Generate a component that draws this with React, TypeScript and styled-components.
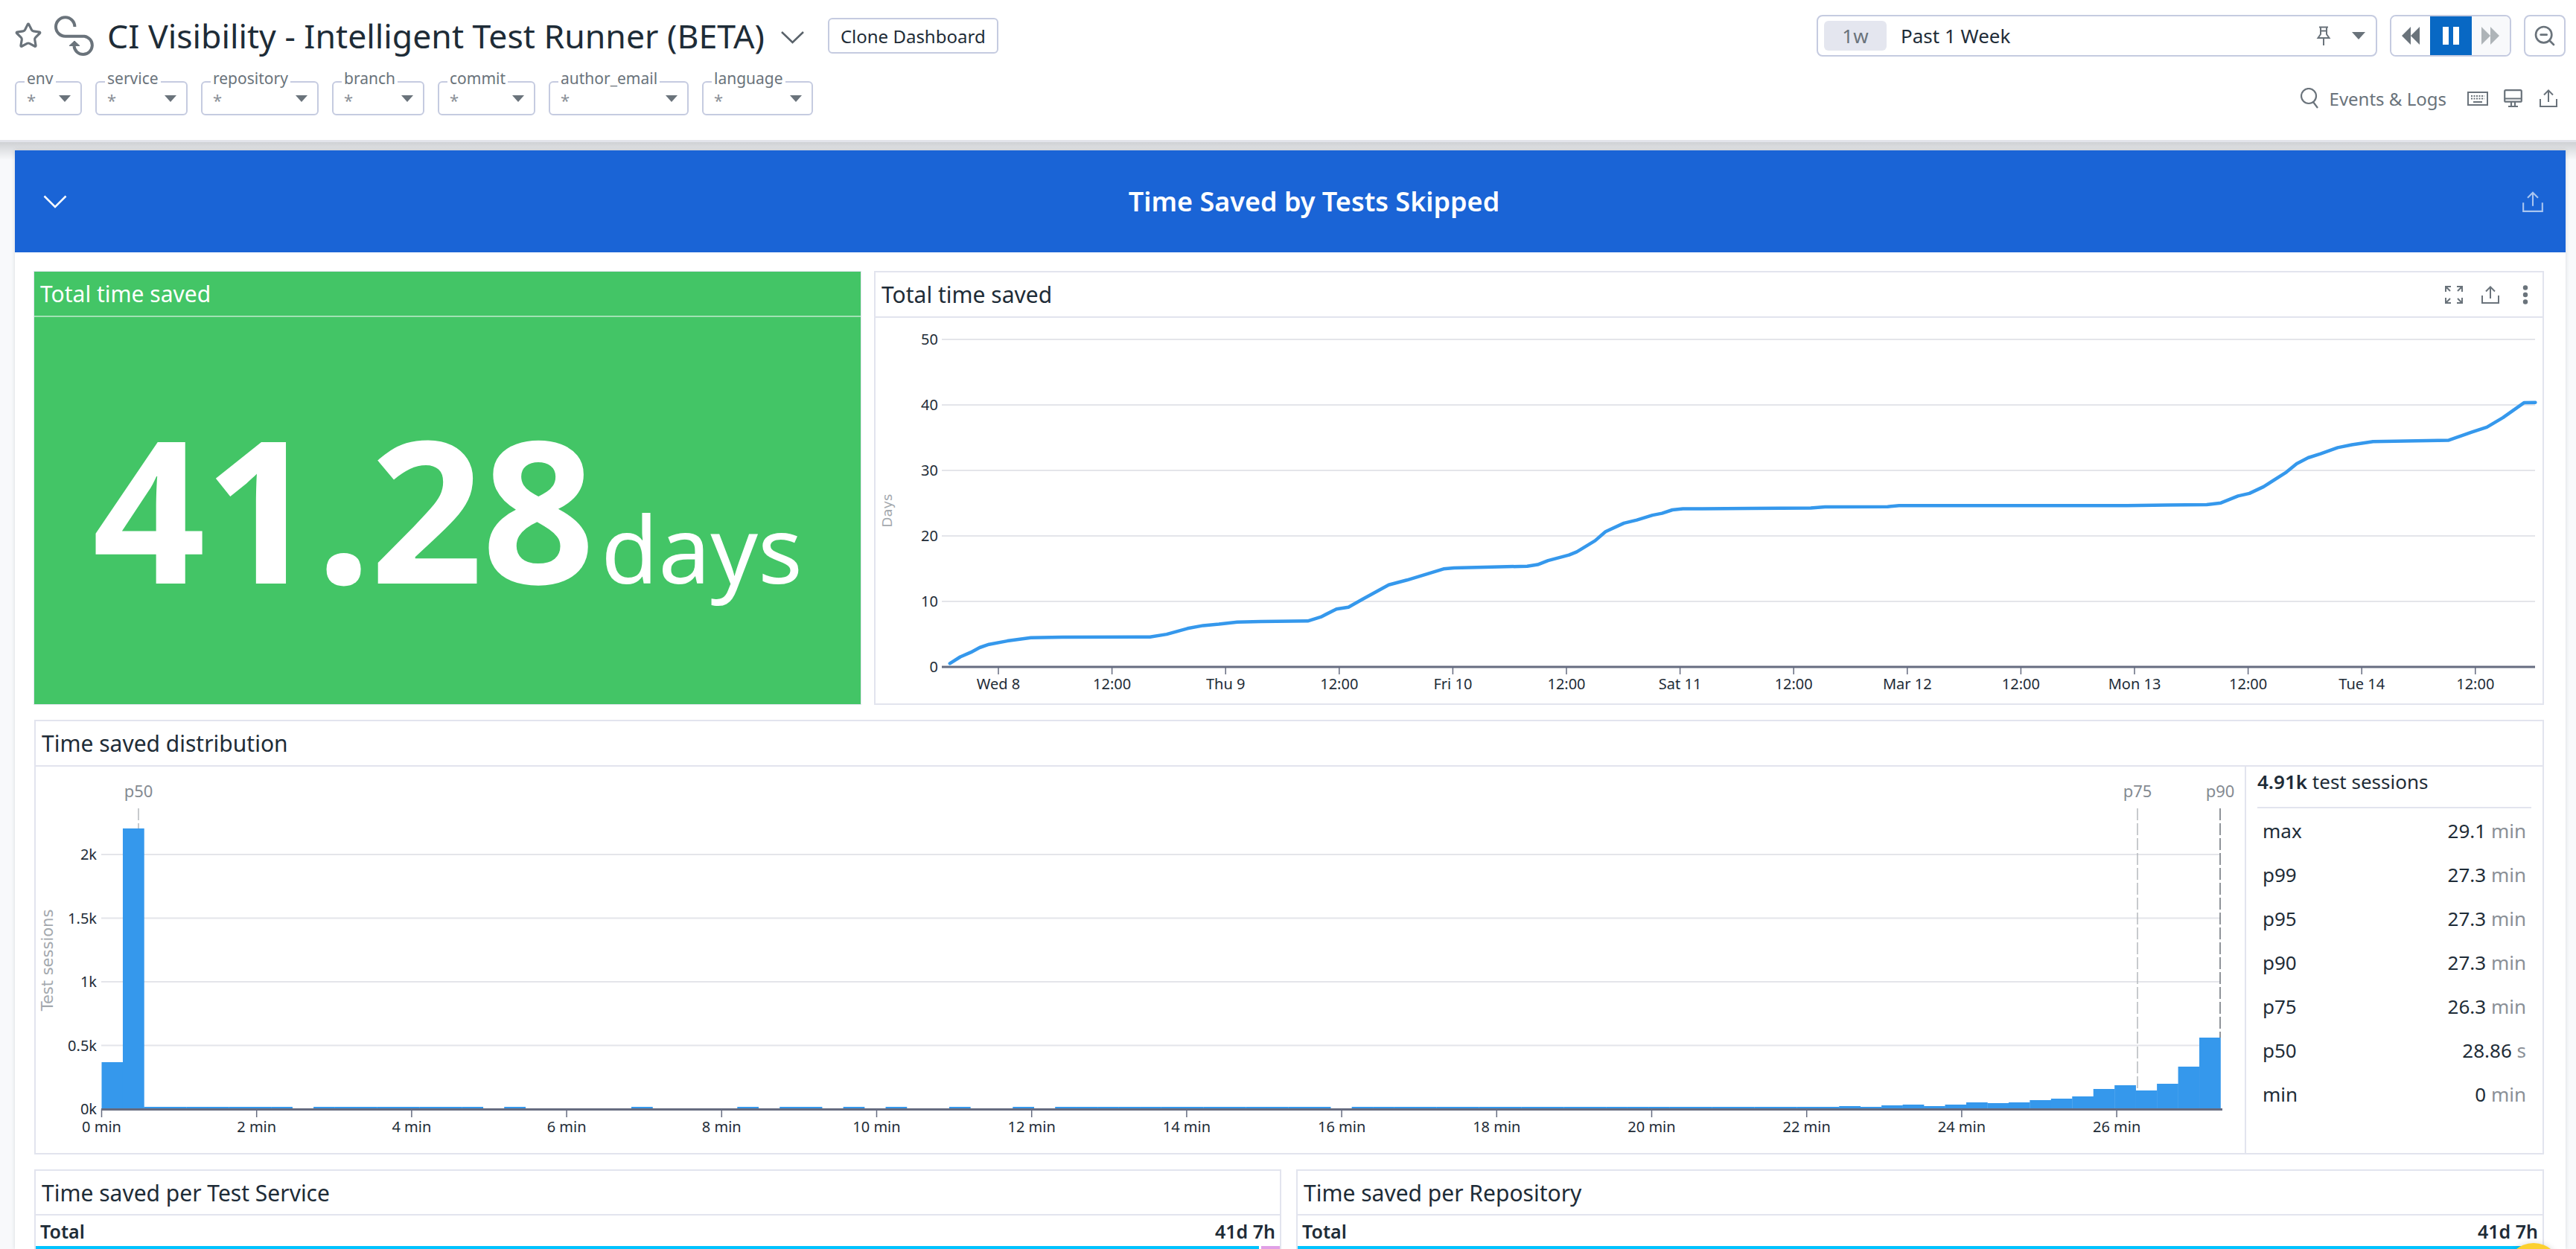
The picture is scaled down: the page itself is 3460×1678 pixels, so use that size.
import React from "react";
import styled, { createGlobalStyle } from "styled-components";
import { Star, ZoomOut } from "lucide-react";

const ink = "#1e2c37";
const muted = "#6a737b";
const line = "#e2e4ee";
const control = "#c5cbe0";
const barBlue = "#3598ec";

const GlobalStyle = createGlobalStyle`
  html, body {
    margin: 0;
    background: #f8f9fb;
    font-family: "Noto Sans", "Open Sans", sans-serif;
    color: ${ink};
  }
`;

const filters = [
  { name: "env", width: 90 },
  { name: "service", width: 124 },
  { name: "repository", width: 158 },
  { name: "branch", width: 124 },
  { name: "commit", width: 131 },
  { name: "author_email", width: 188 },
  { name: "language", width: 149 },
];

const stats = [
  { label: "max", value: "29.1", unit: "min" },
  { label: "p99", value: "27.3", unit: "min" },
  { label: "p95", value: "27.3", unit: "min" },
  { label: "p90", value: "27.3", unit: "min" },
  { label: "p75", value: "26.3", unit: "min" },
  { label: "p50", value: "28.86", unit: "s" },
  { label: "min", value: "0", unit: "min" },
];

// cumulative days, read off the chart in page coordinates
const lineLeft = [
  [165, 1320], [185, 1295], [205, 1278], [222, 1260], [240, 1248], [275, 1235], [320, 1223], [380, 1221],
  [548, 1220], [580, 1210], [620, 1188], [650, 1177], [680, 1172], [715, 1164], [760, 1162], [850, 1160],
  [875, 1145], [905, 1115], [928, 1108], [955, 1078], [1005, 1024], [1040, 1006], [1110, 964], [1130, 960],
  [1270, 954], [1290, 948], [1310, 933], [1350, 912], [1365, 900], [1400, 858], [1420, 824], [1455, 792],
  [1480, 780], [1510, 762], [1528, 755], [1548, 742], [1568, 738],
].map(([x, y]) => [1160 + x / 1.425, 420 + y / 2.8]);

const lineRight = [
  [120, 736], [225, 735], [250, 731], [360, 730], [380, 726], [500, 726], [780, 726], [850, 724],
  [920, 722], [945, 716], [975, 690], [995, 680], [1020, 655], [1060, 600], [1078, 568], [1098, 546],
  [1120, 531], [1150, 508], [1175, 497], [1212, 485], [1345, 480], [1385, 450], [1412, 431], [1440, 395],
  [1477, 339], [1497, 338],
].map(([x, y]) => [2260 + x / 1.307, 420 + y / 2.8]);

const linePoints = [...lineLeft, ...lineRight].map(([x, y]) => `${x.toFixed(1)},${y.toFixed(1)}`).join(" ");

const chartTicks = ["Wed 8", "12:00", "Thu 9", "12:00", "Fri 10", "12:00", "Sat 11", "12:00", "Mar 12", "12:00", "Mon 13", "12:00", "Tue 14", "12:00"];

// histogram: 100 bins, heights in px
const binWidth = 28.46;
const histBase = 1490;
const emptyBins = new Set([9, 18, 20, 21, 22, 23, 24, 26, 27, 28, 29, 31, 34, 36, 38, 39, 41, 42, 44, 58]);
const tailBins: Record<number, number> = {
  99: 96, 98: 57, 97: 34, 96: 25, 95: 32, 94: 27, 93: 17, 92: 14, 91: 12, 90: 9, 89: 8, 88: 9,
  87: 6, 86: 4, 85: 6, 84: 5, 83: 3, 82: 4, 81: 3, 0: 63, 1: 377,
};
const bins = Array.from({ length: 100 }, (_, i) => tailBins[i] ?? (emptyBins.has(i) ? 0 : 3));

const Page = styled.div`
  height: 1678px;
  overflow: hidden;
  display: flex;
  flex-direction: column;
  position: relative;
`;

const Header = styled.header`
  height: 191px;
  box-sizing: border-box;
  background: #fff;
  padding: 20px 14px 0 20px;
  display: flex;
  flex-direction: column;
  flex: none;
  border-bottom: 3px solid #e3e4ea;
`;

const TopRow = styled.div`
  display: flex;
  justify-content: space-between;
  height: 56px;
`;

const TitleGroup = styled.div`
  display: flex;
  align-items: center;
`;

const Logo = styled.svg`
  margin: 0 17px 0 16px;
`;

const Title = styled.h1`
  margin: 0;
  font-size: 44.6px;
  font-weight: 400;
  line-height: 56px;
  white-space: nowrap;
`;

const TitleChevron = styled.svg`
  margin: 4px 32px 0 22px;
`;

const OutlineButton = styled.button`
  height: 48px;
  width: 229px;
  padding: 0;
  background: #fff;
  border: 2px solid ${control};
  border-radius: 6px;
  font: inherit;
  font-size: 24px;
  color: ${ink};
`;

const TimeControls = styled.div`
  display: flex;
  gap: 17px;
`;

const TimePicker = styled.div`
  width: 753px;
  box-sizing: border-box;
  border: 2px solid ${control};
  border-radius: 8px;
  display: flex;
  align-items: center;
  padding: 0 14px 0 8px;
  font-size: 26px;
`;

const RangeChip = styled.span`
  width: 84px;
  height: 40px;
  border-radius: 6px;
  background: #e4e6ef;
  color: ${muted};
  display: flex;
  align-items: center;
  justify-content: center;
  margin-right: 19px;
`;

const RangeText = styled.span`
  flex: 1;
`;

const Caret = styled.span<{ $size?: number }>`
  width: 0;
  height: 0;
  border-left: ${(p) => p.$size ?? 8}px solid transparent;
  border-right: ${(p) => p.$size ?? 8}px solid transparent;
  border-top: ${(p) => (p.$size ?? 8) + 1}px solid ${muted};
`;

const PinIcon = styled.svg`
  margin-right: 28px;
`;

const Playback = styled.div`
  width: 163px;
  box-sizing: border-box;
  border: 2px solid ${control};
  border-radius: 8px;
  display: flex;
  overflow: hidden;
`;

const PlaybackButton = styled.div<{ $kind: "back" | "pause" | "forward" }>`
  flex: ${(p) => (p.$kind === "pause" ? "0 0 56px" : "1")};
  display: flex;
  align-items: center;
  justify-content: center;
  gap: 6px;
  background: ${(p) => (p.$kind === "pause" ? "#0868c4" : p.$kind === "forward" ? "#f8f9fb" : "#fff")};
`;

const PauseBar = styled.span`
  width: 8px;
  height: 24px;
  background: #fff;
`;

const ZoomButton = styled.div`
  width: 56px;
  box-sizing: border-box;
  border: 2px solid ${control};
  border-radius: 8px;
  display: flex;
  align-items: center;
  justify-content: center;
  color: ${muted};
`;

const BottomRow = styled.div`
  display: flex;
  justify-content: space-between;
  align-items: center;
  margin-top: 33px;
  height: 46px;
`;

const FilterRow = styled.div`
  display: flex;
  gap: 18px;
`;

const Filter = styled.div<{ $width: number }>`
  position: relative;
  width: ${(p) => p.$width}px;
  height: 46px;
  box-sizing: border-box;
  border: 2px solid ${control};
  border-radius: 6px;
  display: flex;
  justify-content: space-between;
  padding: 11px 13px 0 14px;
  color: #8a9097;
  font-size: 22px;
  line-height: 24px;
`;

const FilterLabel = styled.span`
  position: absolute;
  top: -16px;
  left: 11px;
  padding: 0 3px;
  background: #fff;
  color: ${muted};
  font-size: 21px;
  line-height: 20px;
  white-space: nowrap;
`;

const FilterCaret = styled(Caret)`
  margin-top: 6px;
`;

const HeaderTools = styled.div`
  display: flex;
  align-items: center;
  color: ${muted};
  font-size: 24px;
  margin-right: 11px;
`;

const ToolIcon = styled.svg<{ $gap?: number }>`
  margin-left: ${(p) => p.$gap ?? 0}px;
  flex: none;
`;

const StarIcon = styled(Star)`
  margin-left: -1px;
`;

const EventsLabel = styled.span`
  margin: 0 28px 0 14px;
`;

const Content = styled.div`
  flex: 1;
  min-height: 0;
  padding: 11px 14px 0 20px;
  background: linear-gradient(#cfd1d4, #f8f9fb 24px);
`;

const Main = styled.main`
  height: 100%;
  background: #fff;
  box-shadow: 0 0 5px rgba(60, 70, 90, 0.18);
`;

const Banner = styled.div`
  height: 137px;
  background: #1a64d6;
  color: #fff;
  display: grid;
  grid-template-columns: 1fr auto 1fr;
  align-items: center;
  padding: 0 30px 0 38px;
`;

const BannerTitle = styled.h2`
  margin: 0 0 0 56px;
  font-size: 36px;
  font-weight: 600;
`;

const BannerShare = styled.svg`
  justify-self: end;
`;

const Dashboard = styled.div`
  padding: 25px 29px 0 26px;
  display: flex;
  flex-direction: column;
  gap: 20px;
`;

const WidgetRow = styled.div<{ $gap: number }>`
  display: flex;
  gap: ${(p) => p.$gap}px;
`;

const Card = styled.section<{ $width?: number; $height?: number }>`
  box-sizing: border-box;
  border: 2px solid ${line};
  background: #fff;
  flex: ${(p) => (p.$width ? `0 0 ${p.$width}px` : "1")};
  height: ${(p) => (p.$height ? `${p.$height}px` : "auto")};
  display: flex;
  flex-direction: column;
`;

const CardHeader = styled.div<{ $height?: number }>`
  height: ${(p) => p.$height ?? 61}px;
  flex: none;
  box-sizing: border-box;
  border-bottom: 2px solid ${line};
  display: flex;
  align-items: center;
  justify-content: space-between;
  padding: 0 8px;
`;

const CardTitle = styled.h3`
  margin: 0;
  font-size: 30px;
  font-weight: 400;
`;

const CardActions = styled.div`
  display: flex;
  align-items: center;
  margin-right: 11px;
`;

const GreenCard = styled.section`
  flex: 0 0 1112px;
  margin-left: -1px;
  height: 583px;
  box-sizing: border-box;
  border: 1px solid ${line};
  background: #43c566;
  color: #fff;
  display: flex;
  flex-direction: column;
`;

const GreenHeader = styled.div`
  height: 61px;
  flex: none;
  box-sizing: border-box;
  border-bottom: 2px solid rgba(255, 255, 255, 0.5);
  display: flex;
  align-items: center;
  padding: 0 8px;
`;

const GreenTitle = styled.h3`
  margin: 0;
  font-size: 30px;
  font-weight: 400;
`;

const BigValue = styled.div`
  flex: 1;
  display: flex;
  align-items: baseline;
  justify-content: center;
  line-height: 510px;
`;

const BigNumber = styled.span`
  font-size: 266px;
  font-weight: 700;
  letter-spacing: -2px;
`;

const BigUnit = styled.span`
  font-size: 125px;
  font-weight: 400;
  margin-left: 10px;
`;

const DistributionBody = styled.div`
  display: flex;
  flex: 1;
`;

const DistributionChart = styled.svg`
  flex: none;
  display: block;
`;

const LineChart = styled.svg`
  display: block;
`;

const StatsPanel = styled.aside`
  flex: 1;
  border-left: 2px solid ${line};
  padding: 0 15px;
`;

const StatsTitle = styled.div`
  height: 56px;
  box-sizing: border-box;
  border-bottom: 2px solid ${line};
  font-size: 26px;
  line-height: 40px;
`;

const StatRow = styled.div`
  height: 59px;
  display: flex;
  align-items: center;
  justify-content: space-between;
  padding: 0 7px;
  font-size: 26px;
`;

const StatUnit = styled.span`
  color: #8a9097;
`;

const Strong = styled.strong`
  font-weight: 600;
`;

const TotalRow = styled.div`
  height: 41px;
  flex: none;
  display: flex;
  align-items: center;
  justify-content: space-between;
  padding: 0 6px;
  font-size: 25px;
  font-weight: 600;
`;

const TotalBar = styled.div`
  display: flex;
  flex: none;
  gap: 3px;
  height: 60px;
`;

const BarSegment = styled.div<{ $color: string; $width?: number }>`
  background: ${(p) => p.$color};
  flex: ${(p) => (p.$width ? `0 0 ${p.$width}px` : "1")};
`;

const ChatBubble = styled.div`
  position: absolute;
  left: 3366px;
  top: 1670px;
  width: 74px;
  height: 74px;
  border-radius: 50%;
  background: #fcd02f;
  box-shadow: 0 0 8px rgba(0, 0, 0, 0.15);
`;

function ShareIcon({ size = 24, color = muted, gap }: { size?: number; color?: string; gap?: number }) {
  return (
    <ToolIcon $gap={gap} width={size} height={size} viewBox="0 0 24 24" fill="none" stroke={color} strokeWidth="2">
      <path d="M12 17V1.5M6 7.5l6-6 6 6M1 13v10h22V13" />
    </ToolIcon>
  );
}

function PlayArrows({ flip, color }: { flip?: boolean; color: string }) {
  return (
    <svg width="26" height="24" viewBox="0 0 26 24" fill={color}>
      <path d={flip ? "M13 0v24l12-12zM1 0v24l12-12z" : "M13 0v24L1 12zM25 0v24L13 12z"} />
    </svg>
  );
}

function TimeSavedChart() {
  return (
    <LineChart width="2239" height="518" viewBox="1176 427 2239 518" fontFamily="Noto Sans, sans-serif" fontSize="20" fill={ink}>
      {[50, 40, 30, 20, 10].map((v, i) => (
        <line key={v} x1="1265" x2="3405" y1={456 + i * 88} y2={456 + i * 88} stroke="#e4e5ea" strokeWidth="2" />
      ))}
      {[50, 40, 30, 20, 10, 0].map((v, i) => (
        <text key={v} x="1260" y={463 + i * 88} textAnchor="end">{v}</text>
      ))}
      <text transform="translate(1198 686) rotate(-90)" textAnchor="middle" fontFamily="DejaVu Sans, sans-serif" fontSize="18" fill="#a3a8ad">Days</text>
      <line x1="1265" x2="3405" y1="896" y2="896" stroke="#666c80" strokeWidth="3" />
      {chartTicks.map((t, i) => {
        const x = 1341 + i * 152.6;
        return (
          <g key={i}>
            <line x1={x} x2={x} y1="896" y2="906" stroke="#666c80" strokeWidth="1.5" />
            <text x={x} y="926" textAnchor="middle">{t}</text>
          </g>
        );
      })}
      <polyline points={linePoints} fill="none" stroke={barBlue} strokeWidth="4.5" strokeLinejoin="round" strokeLinecap="round" />
    </LineChart>
  );
}

function HistogramChart() {
  const axisLabels = Array.from({ length: 14 }, (_, i) => i * 2);
  return (
    <DistributionChart width="2967" height="519" viewBox="48 1030 2967 519" fontFamily="Noto Sans, sans-serif" fontSize="20" fill={ink}>
      {[2, 1.5, 1, 0.5].map((v) => {
        const y = histBase - v * 171;
        return (
          <g key={v}>
            <line x1="136" x2="2982" y1={y} y2={y} stroke="#e4e5ea" strokeWidth="2" />
            <text x="130" y={y + 7} textAnchor="end">{`${v}k`}</text>
          </g>
        );
      })}
      <text x="130" y={histBase + 7} textAnchor="end">0k</text>
      <text transform="translate(71 1290) rotate(-90)" textAnchor="middle" fontFamily="DejaVu Sans, sans-serif" fontSize="21" fill="#a3a8ad">Test sessions</text>
      {bins.map((h, i) =>
        h > 0 ? <rect key={i} x={136.5 + i * binWidth} y={histBase - h} width={binWidth + 0.3} height={h} fill={barBlue} /> : null,
      )}
      <line x1="136" x2="2985" y1={histBase + 0.5} y2={histBase + 0.5} stroke="#666c80" strokeWidth="3" />
      {axisLabels.map((m) => {
        const x = 136.5 + m * 104.1;
        return (
          <g key={m}>
            <line x1={x} x2={x} y1={histBase} y2={histBase + 11} stroke="#666c80" strokeWidth="1.5" />
            <text x={x} y={histBase + 31} textAnchor="middle">{`${m} min`}</text>
          </g>
        );
      })}
      <line x1="186" x2="186" y1="1086" y2="1113" stroke="#b5b9bd" strokeWidth="1.5" strokeDasharray="16 4" />
      <line x1="2871" x2="2871" y1="1086" y2="1466" stroke="#b5b9bd" strokeWidth="1.5" strokeDasharray="16 4" />
      <line x1="2982" x2="2982" y1="1086" y2="1394" stroke="#6b7078" strokeWidth="1.5" strokeDasharray="16 4" />
      <text x="186" y="1071" textAnchor="middle" fill="#848a91" fontSize="22">p50</text>
      <text x="2871" y="1071" textAnchor="middle" fill="#848a91" fontSize="22">p75</text>
      <text x="2982" y="1071" textAnchor="middle" fill="#848a91" fontSize="22">p90</text>
    </DistributionChart>
  );
}

export default function App() {
  return (
    <Page>
      <GlobalStyle />
      <Header>
        <TopRow>
          <TitleGroup>
            <StarIcon size={38} color={muted} strokeWidth={2} />
            <Logo width="54" height="54" viewBox="63 11 54 54" fill="none" stroke={muted} strokeWidth="4">
              <path d="M90.4 26A12.7 12.7 0 1 0 77.7 38.7H103.3A12.2 12.2 0 1 1 89.5 52" />
              <path d="M90 45l7 6.5H83z" fill={muted} strokeWidth="1" />
            </Logo>
            <Title>CI Visibility - Intelligent Test Runner (BETA)</Title>
            <TitleChevron width="31" height="17" viewBox="0 0 31 17" fill="none" stroke="#59626a" strokeWidth="2.5">
              <path d="M1 1l14.5 14L30 1" />
            </TitleChevron>
            <OutlineButton>Clone Dashboard</OutlineButton>
          </TitleGroup>
          <TimeControls>
            <TimePicker>
              <RangeChip>1w</RangeChip>
              <RangeText>Past 1 Week</RangeText>
              <PinIcon width="20" height="26" viewBox="0 0 20 26" fill="none" stroke={muted} strokeWidth="2">
                <path d="M4 1.500h12M6 1.500V11l-3.500 5h15L14 11V1.500M10 16v10M6 6.500h8" />
              </PinIcon>
              <Caret $size={9} />
            </TimePicker>
            <Playback>
              <PlaybackButton $kind="back"><PlayArrows color={muted} /></PlaybackButton>
              <PlaybackButton $kind="pause"><PauseBar /><PauseBar /></PlaybackButton>
              <PlaybackButton $kind="forward"><PlayArrows flip color="#aeb4b8" /></PlaybackButton>
            </Playback>
            <ZoomButton><ZoomOut size={32} strokeWidth={2} /></ZoomButton>
          </TimeControls>
        </TopRow>
        <BottomRow>
          <FilterRow>
            {filters.map((f) => (
              <Filter key={f.name} $width={f.width}>
                <FilterLabel>{f.name}</FilterLabel>
                <span>*</span>
                <FilterCaret $size={8} />
              </Filter>
            ))}
          </FilterRow>
          <HeaderTools>
            <ToolIcon width="25" height="28" viewBox="0 0 25 28" fill="none" stroke={muted} strokeWidth="2.2">
              <circle cx="11" cy="11" r="10" />
              <path d="M17 19l6 8" />
            </ToolIcon>
            <EventsLabel>Events &amp; Logs</EventsLabel>
            <ToolIcon width="28" height="19" viewBox="0 0 28 19" fill="none" stroke={muted} strokeWidth="2">
              <rect x="1" y="1" width="26" height="17" />
              <path d="M5 6h18M5 9.500h18" strokeDasharray="2 1.500" />
              <path d="M8 14h12" />
            </ToolIcon>
            <ToolIcon $gap={21} width="25" height="24" viewBox="0 0 25 24" fill="none" stroke={muted} strokeWidth="2.2">
              <rect x="1.200" y="1.200" width="22.600" height="15.500" rx="1.500" />
              <path d="M1.500 12.500h22M10 17v5.500M15 17v5.500M6 23h13" />
            </ToolIcon>
            <ShareIcon gap={23} />
          </HeaderTools>
        </BottomRow>
      </Header>
      <Content>
        <Main>
          <Banner>
            <svg width="32" height="18" viewBox="0 0 32 18" fill="none" stroke="#fff" strokeWidth="2.5">
              <path d="M1.500 1.500L16 16 30.500 1.500" />
            </svg>
            <BannerTitle>Time Saved by Tests Skipped</BannerTitle>
            <BannerShare width="28" height="28" viewBox="0 0 24 24" fill="none" stroke="#a9c5f0" strokeWidth="1.8">
              <path d="M12 17V1.500M6 7.500l6-6 6 6M1 13v10h22V13" />
            </BannerShare>
          </Banner>
          <Dashboard>
            <WidgetRow $gap={17}>
              <GreenCard>
                <GreenHeader><GreenTitle>Total time saved</GreenTitle></GreenHeader>
                <BigValue>
                  <BigNumber>41.28</BigNumber>
                  <BigUnit>days</BigUnit>
                </BigValue>
              </GreenCard>
              <Card $height={583}>
                <CardHeader>
                  <CardTitle>Total time saved</CardTitle>
                  <CardActions>
                    <ToolIcon width="24" height="24" viewBox="0 0 24 24" fill="none" stroke={muted} strokeWidth="2">
                      <path d="M1 8V1h7M1 1l6 6M23 8V1h-7M23 1l-6 6M1 16v7h7M1 23l6-6M23 16v7h-7M23 23l-6-6" />
                    </ToolIcon>
                    <ShareIcon gap={25} />
                    <ToolIcon $gap={31} width="8" height="26" viewBox="0 0 8 26" fill={muted}>
                      <circle cx="4" cy="3.500" r="3.200" />
                      <circle cx="4" cy="13" r="3.200" />
                      <circle cx="4" cy="22.500" r="3.200" />
                    </ToolIcon>
                  </CardActions>
                </CardHeader>
                <TimeSavedChart />
              </Card>
            </WidgetRow>
            <Card $height={584}>
              <CardHeader><CardTitle>Time saved distribution</CardTitle></CardHeader>
              <DistributionBody>
                <HistogramChart />
                <StatsPanel>
                  <StatsTitle><Strong>4.91k</Strong> test sessions</StatsTitle>
                  {stats.map((s) => (
                    <StatRow key={s.label}>
                      <span>{s.label}</span>
                      <span>{s.value} <StatUnit>{s.unit}</StatUnit></span>
                    </StatRow>
                  ))}
                </StatsPanel>
              </DistributionBody>
            </Card>
            <WidgetRow $gap={20}>
              <Card $width={1675}>
                <CardHeader $height={60}><CardTitle>Time saved per Test Service</CardTitle></CardHeader>
                <TotalRow><span>Total</span><span>41d 7h</span></TotalRow>
                <TotalBar>
                  <BarSegment $color="#00c3ff" />
                  <BarSegment $color="#e0a0e6" $width={25} />
                </TotalBar>
              </Card>
              <Card>
                <CardHeader $height={60}><CardTitle>Time saved per Repository</CardTitle></CardHeader>
                <TotalRow><span>Total</span><span>41d 7h</span></TotalRow>
                <TotalBar><BarSegment $color="#00c3ff" /></TotalBar>
              </Card>
            </WidgetRow>
          </Dashboard>
        </Main>
      </Content>
      <ChatBubble />
    </Page>
  );
}
